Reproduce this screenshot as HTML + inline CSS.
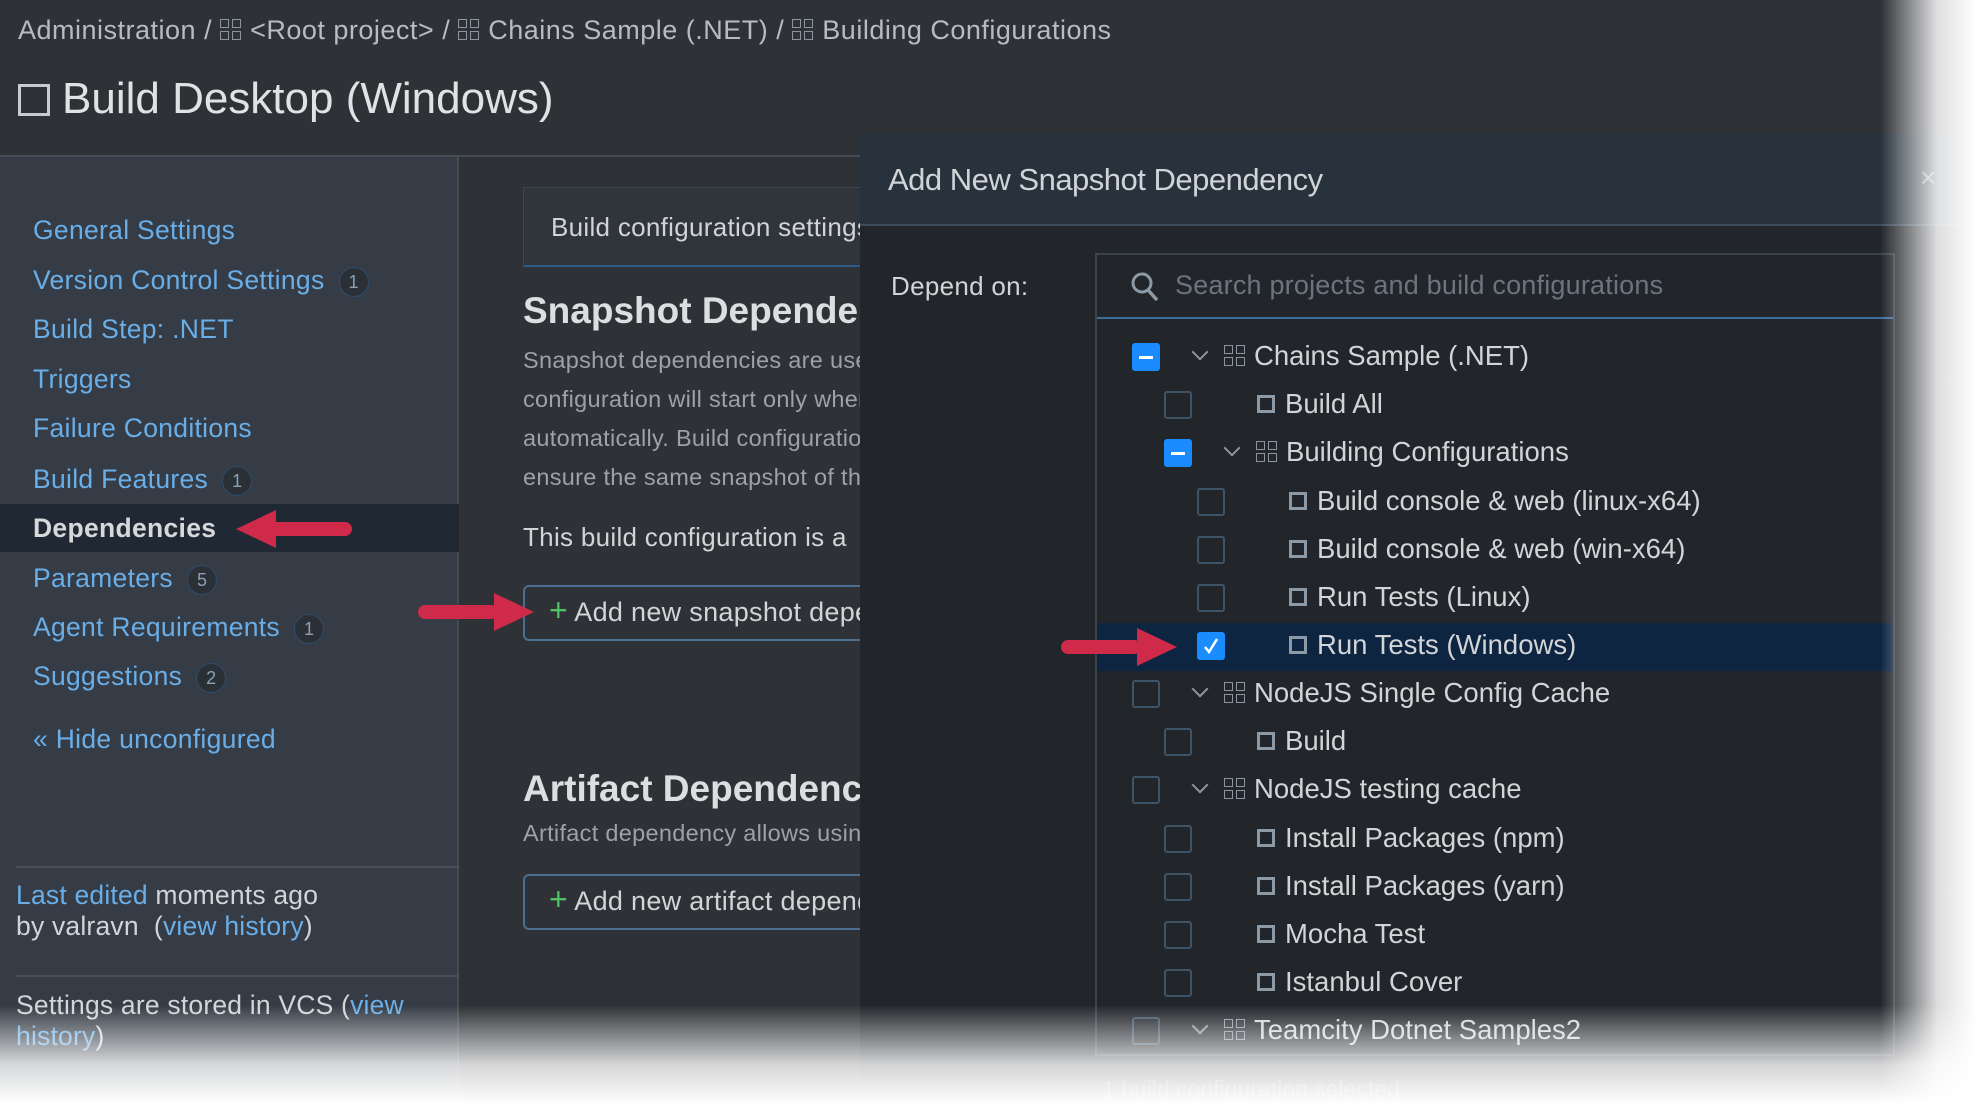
<!DOCTYPE html>
<html><head><meta charset="utf-8"><style>
*{margin:0;padding:0;box-sizing:border-box}
body{width:1976px;height:1104px;overflow:hidden;background:#2e3135;font-family:"Liberation Sans",sans-serif;color:#d2d4d7;position:relative}
.a{position:absolute;white-space:nowrap}
.lnk{color:#6aaee8}
.sb{font-size:26.5px;letter-spacing:0.3px}
.badge{display:inline-block;width:30px;height:30px;border-radius:15px;background:#2b3037;border:1px solid #2c4d6e;color:#8aa0b5;font-size:18px;text-align:center;line-height:28px;vertical-align:middle;margin-left:14px;letter-spacing:0}
.grid{display:inline-block;width:22px;height:22px;position:relative;vertical-align:middle;margin-right:8px;top:-2px}
.grid i{position:absolute;width:9px;height:9px;border:1.5px solid #8c959f}
.cb{position:absolute;width:28px;height:28px;border:2px solid #3f5366;border-radius:3px}
.cb.on{background:#1a8cff;border-color:#1a8cff}
.sq{display:inline-block;width:18px;height:18px;border:3px solid #8c99a6;vertical-align:middle;margin-right:10px;position:relative;top:-2px}
.row{position:absolute;font-size:27.5px;color:#d2d4d7;white-space:nowrap}
.chev{position:absolute;width:12px;height:12px;border-right:2px solid #8c959f;border-bottom:2px solid #8c959f;transform:rotate(45deg)}
.arrow{position:absolute;height:14px;background:#cf2a4a;border-radius:7px}
</style></head><body>
<div class="a" style="left:18px;top:15px;font-size:27px;letter-spacing:0.5px;color:#b8bcc1">Administration / <span class="grid"><i style="left:0;top:0"></i><i style="left:12px;top:0"></i><i style="left:0;top:12px"></i><i style="left:12px;top:12px"></i></span>&lt;Root project&gt; / <span class="grid"><i style="left:0;top:0"></i><i style="left:12px;top:0"></i><i style="left:0;top:12px"></i><i style="left:12px;top:12px"></i></span>Chains Sample (.NET) / <span class="grid"><i style="left:0;top:0"></i><i style="left:12px;top:0"></i><i style="left:0;top:12px"></i><i style="left:12px;top:12px"></i></span>Building Configurations</div>
<div class="a" style="left:18px;top:84px;width:32px;height:32px;border:3px solid #c8ccd0"></div>
<div class="a" style="left:62px;top:74px;font-size:44px;color:#e0e2e4">Build Desktop (Windows)</div>
<div class="a" style="left:0;top:155px;width:1976px;height:2px;background:#454b53"></div>
<div class="a" style="left:0;top:157px;width:459px;height:947px;background:#353c45;border-right:2px solid #454b53"></div>
<div class="a" style="left:0;top:504px;width:459px;height:48px;background:#1f2833"></div>
<div class="a lnk sb" style="left:33px;top:215px">General Settings</div>
<div class="a lnk sb" style="left:33px;top:265px">Version Control Settings<span class="badge">1</span></div>
<div class="a lnk sb" style="left:33px;top:314px">Build Step: .NET</div>
<div class="a lnk sb" style="left:33px;top:364px">Triggers</div>
<div class="a lnk sb" style="left:33px;top:413px">Failure Conditions</div>
<div class="a lnk sb" style="left:33px;top:464px">Build Features<span class="badge">1</span></div>
<div class="a sb" style="left:33px;top:513px;font-weight:bold;color:#d6d8da">Dependencies</div>
<div class="a lnk sb" style="left:33px;top:563px">Parameters<span class="badge">5</span></div>
<div class="a lnk sb" style="left:33px;top:612px">Agent Requirements<span class="badge">1</span></div>
<div class="a lnk sb" style="left:33px;top:661px">Suggestions<span class="badge">2</span></div>
<div class="a lnk sb" style="left:33px;top:724px">« Hide unconfigured</div>
<div class="a" style="left:16px;top:866px;width:443px;height:2px;background:#4a5059"></div>
<div class="a" style="left:16px;top:880px;font-size:26.5px;letter-spacing:0.2px;line-height:31px"><span class="lnk">Last edited</span> moments ago<br>by valravn &nbsp;(<span class="lnk">view history</span>)</div>
<div class="a" style="left:16px;top:975px;width:443px;height:2px;background:#4a5059"></div>
<div class="a" style="left:16px;top:990px;font-size:26.5px;letter-spacing:0.2px;line-height:31px">Settings are stored in VCS (<span class="lnk">view</span><br><span class="lnk">history</span>)</div>
<div class="a" style="left:523px;top:187px;width:360px;height:80px;background:#30353c;border:1px solid #3e4650;border-bottom:2px solid #2c5a85"></div>
<div class="a" style="left:551px;top:212px;font-size:26px;letter-spacing:0.3px">Build configuration settings</div>
<div class="a" style="left:523px;top:290px;font-size:37px;font-weight:bold;color:#dcdee0">Snapshot Dependencies</div>
<div class="a" style="left:523px;top:341px;font-size:23.5px;letter-spacing:0.3px;line-height:39px;color:#9ca2a8">Snapshot dependencies are used<br>configuration will start only when<br>automatically. Build configuration<br>ensure the same snapshot of the</div>
<div class="a" style="left:523px;top:522px;font-size:26px;letter-spacing:0.3px">This build configuration is a</div>
<div class="a" style="left:523px;top:585px;width:380px;height:56px;border:2px solid #4a6f90;border-radius:6px"></div>
<div class="a" style="left:549px;top:597px;font-size:27px;letter-spacing:0.3px"><span style="color:#4cc264;font-size:32px;line-height:26px">+</span> Add new snapshot dependency</div>
<div class="a" style="left:523px;top:768px;font-size:37px;font-weight:bold;color:#dcdee0">Artifact Dependencies</div>
<div class="a" style="left:523px;top:820px;font-size:23.5px;letter-spacing:0.3px;color:#9ca2a8">Artifact dependency allows using</div>
<div class="a" style="left:523px;top:874px;width:380px;height:56px;border:2px solid #4a6f90;border-radius:6px"></div>
<div class="a" style="left:549px;top:886px;font-size:27px;letter-spacing:0.3px"><span style="color:#4cc264;font-size:32px;line-height:26px">+</span> Add new artifact dependency</div>
<div class="a" style="left:860px;top:134px;width:1116px;height:970px;background:#22252a;overflow:hidden">
 <div class="a" style="left:0;top:0;width:1116px;height:92px;background:#27323d;border-bottom:2px solid #3d4b5a"></div>
 <div class="a" style="left:28px;top:28px;font-size:31px;color:#d0d4d8;letter-spacing:-0.5px">Add New Snapshot Dependency</div>
 <div class="a" style="left:1060px;top:28px;font-size:28px;color:#8a939c">×</div>
 <div class="a" style="left:31px;top:137px;font-size:26px;letter-spacing:0.3px">Depend on:</div>
 <div class="a" style="left:235px;top:119px;width:800px;height:803px;border:2px solid #3a424b"></div>
 <div class="a" style="left:237px;top:183px;width:796px;height:2px;background:#3c6e9c"></div>
 <svg class="a" style="left:270px;top:137px" width="30" height="32" viewBox="0 0 30 32"><circle cx="12" cy="12" r="9" fill="none" stroke="#8c99a6" stroke-width="3"/><line x1="18" y1="19" x2="27" y2="29" stroke="#8c99a6" stroke-width="3.5"/></svg>
 <div class="a" style="left:315px;top:136px;font-size:27px;letter-spacing:0.2px;color:#6b7580">Search projects and build configurations</div>
 <div class="a" style="left:237px;top:489px;width:796px;height:48px;background:#0d2540"></div>
</div>
<div class="cb on" style="left:1132px;top:343px"><div style="position:absolute;left:5px;top:11px;width:14px;height:3px;background:#fff"></div></div>
<div class="chev" style="left:1194px;top:346px"></div>
<div class="row" style="left:1224px;top:340px"><span class="grid"><i style="left:0;top:0"></i><i style="left:12px;top:0"></i><i style="left:0;top:12px"></i><i style="left:12px;top:12px"></i></span>Chains Sample (.NET)</div>
<div class="cb" style="left:1164px;top:391px"></div>
<div class="row" style="left:1257px;top:388px"><span class="sq"></span>Build All</div>
<div class="cb on" style="left:1164px;top:439px"><div style="position:absolute;left:5px;top:11px;width:14px;height:3px;background:#fff"></div></div>
<div class="chev" style="left:1226px;top:442px"></div>
<div class="row" style="left:1256px;top:436px"><span class="grid"><i style="left:0;top:0"></i><i style="left:12px;top:0"></i><i style="left:0;top:12px"></i><i style="left:12px;top:12px"></i></span>Building Configurations</div>
<div class="cb" style="left:1197px;top:488px"></div>
<div class="row" style="left:1289px;top:485px"><span class="sq"></span>Build console &amp; web (linux-x64)</div>
<div class="cb" style="left:1197px;top:536px"></div>
<div class="row" style="left:1289px;top:533px"><span class="sq"></span>Build console &amp; web (win-x64)</div>
<div class="cb" style="left:1197px;top:584px"></div>
<div class="row" style="left:1289px;top:581px"><span class="sq"></span>Run Tests (Linux)</div>
<div class="cb on" style="left:1197px;top:632px"><svg style="position:absolute;left:2px;top:2px" width="20" height="20" viewBox="0 0 20 20"><path d="M4 11 L8 16 L16 3" fill="none" stroke="#fff" stroke-width="2.5"/></svg></div>
<div class="row" style="left:1289px;top:629px"><span class="sq"></span>Run Tests (Windows)</div>
<div class="cb" style="left:1132px;top:680px"></div>
<div class="chev" style="left:1194px;top:683px"></div>
<div class="row" style="left:1224px;top:677px"><span class="grid"><i style="left:0;top:0"></i><i style="left:12px;top:0"></i><i style="left:0;top:12px"></i><i style="left:12px;top:12px"></i></span>NodeJS Single Config Cache</div>
<div class="cb" style="left:1164px;top:728px"></div>
<div class="row" style="left:1257px;top:725px"><span class="sq"></span>Build</div>
<div class="cb" style="left:1132px;top:776px"></div>
<div class="chev" style="left:1194px;top:779px"></div>
<div class="row" style="left:1224px;top:773px"><span class="grid"><i style="left:0;top:0"></i><i style="left:12px;top:0"></i><i style="left:0;top:12px"></i><i style="left:12px;top:12px"></i></span>NodeJS testing cache</div>
<div class="cb" style="left:1164px;top:825px"></div>
<div class="row" style="left:1257px;top:822px"><span class="sq"></span>Install Packages (npm)</div>
<div class="cb" style="left:1164px;top:873px"></div>
<div class="row" style="left:1257px;top:870px"><span class="sq"></span>Install Packages (yarn)</div>
<div class="cb" style="left:1164px;top:921px"></div>
<div class="row" style="left:1257px;top:918px"><span class="sq"></span>Mocha Test</div>
<div class="cb" style="left:1164px;top:969px"></div>
<div class="row" style="left:1257px;top:966px"><span class="sq"></span>Istanbul Cover</div>
<div class="cb" style="left:1132px;top:1017px"></div>
<div class="chev" style="left:1194px;top:1020px"></div>
<div class="row" style="left:1224px;top:1014px"><span class="grid"><i style="left:0;top:0"></i><i style="left:12px;top:0"></i><i style="left:0;top:12px"></i><i style="left:12px;top:12px"></i></span>Teamcity Dotnet Samples2</div>
<div class="a" style="left:1102px;top:1076px;font-size:23px;color:#6b7580">1 build configuration selected</div>
<div class="arrow" style="left:270px;top:522px;width:82px"></div>
<div class="a" style="left:236px;top:510px;width:0;height:0;border-top:19px solid transparent;border-bottom:19px solid transparent;border-right:40px solid #cf2a4a"></div>
<div class="arrow" style="left:418px;top:605px;width:80px"></div>
<div class="a" style="left:494px;top:593px;width:0;height:0;border-top:19px solid transparent;border-bottom:19px solid transparent;border-left:40px solid #cf2a4a"></div>
<div class="arrow" style="left:1061px;top:640px;width:80px"></div>
<div class="a" style="left:1137px;top:628px;width:0;height:0;border-top:19px solid transparent;border-bottom:19px solid transparent;border-left:40px solid #cf2a4a"></div>
<div class="a" style="left:1880px;top:0;width:96px;height:1104px;background:linear-gradient(to right,rgba(255,255,255,0),rgba(255,255,255,0.85) 60%,#fff)"></div>
<div class="a" style="left:0;top:1005px;width:1976px;height:99px;background:linear-gradient(to bottom,rgba(255,255,255,0),rgba(255,255,255,0.8) 60%,#fff)"></div>
</body></html>
